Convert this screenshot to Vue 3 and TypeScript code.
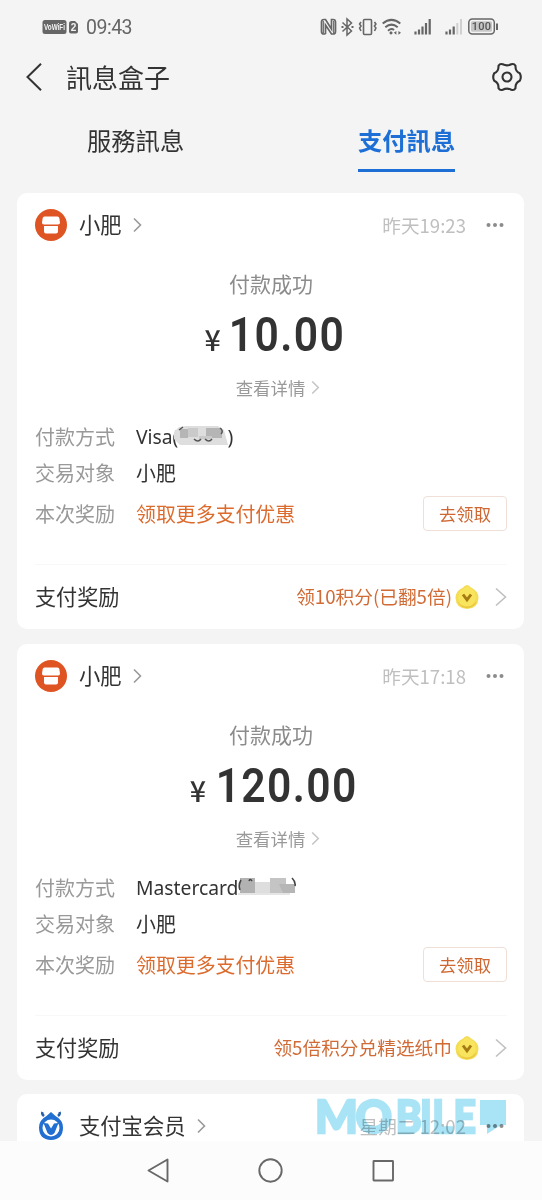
<script setup lang="ts">
interface Payment {
  time: string
  amount: string
  method: string
  mask: 'visa' | 'master'
  reward: string
}

const payments: Payment[] = [
  { time: '昨天19:23', amount: '10.00', method: 'Visa(', mask: 'visa', reward: '领10积分(已翻5倍)' },
  { time: '昨天17:18', amount: '120.00', method: 'Mastercard', mask: 'master', reward: '领5倍积分兑精选纸巾' },
]
</script>

<template>
  <div class="screen">
    <div class="status">
      <svg class="sim" width="38" height="16" viewBox="0 0 38 16">
        <rect x="0.5" y="1" width="24" height="14" rx="2.5" fill="#666" />
        <text x="12.5" y="11.4" text-anchor="middle" textLength="21" lengthAdjust="spacingAndGlyphs" class="sim-text">VoWiFi</text>
        <path d="M27 4.5Q27 2 29.5 2H33L36 5V12.5Q36 14.5 34 14.5H29Q27 14.5 27 12.5Z" fill="#666" />
        <text x="31.5" y="12" text-anchor="middle" class="sim-text two">2</text>
      </svg>
      <span class="clock">09:43</span>
      <svg class="indicators" width="180" height="20" viewBox="320 17 180 20" fill="none" stroke="#666">
        <path d="M325.500 34H324Q321.500 34 321.500 31.500V22Q321.500 19.500 324 19.500H325.500L331.500 29V19.500H333Q335.500 19.500 335.500 22V31.500Q335.500 34 333 34H331.500L325.500 25V34" stroke-width="1.700" />
        <path d="M323.300 21V33M333.700 21V33" stroke-width="1.200" />
        <path d="M342.500 22.500L351.500 31L347 35V19L351.500 23L342.500 31.500" stroke-width="1.500" />
        <path d="M341.500 27h2M351.500 27h2" stroke-width="1.800" />
        <rect x="363.500" y="19.500" width="8" height="15" rx="1" stroke-width="1.600" />
        <path d="M361 22l-1.400 2 1.400 2-1.400 2 1.400 3M374.500 22l1.400 2-1.400 2 1.400 2-1.400 3" stroke-width="1.600" />
        <path d="M382.700 23.500Q391.500 16.200 400.300 23.500M385.300 27.200Q391.500 22 397.700 27.200M388 30.700Q391.500 27.800 394 30" stroke-width="2" />
        <path d="M391 31l1.900 1.900-1.900 1.900-1.900-1.900zM393.800 32.800l2.600-1.900v3.800zM401 32.800l-2.600-1.900v3.800z" fill="#666" stroke="none" />
        <path d="M415.500 31.500V34.500M419 29.500V34.500M422.500 26.500V34.500M426 23V34.500M429.700 19V34.500" stroke-width="2.200" />
        <path d="M446.500 31.500V34.500M450 29.500V34.500M453.700 26.500V34.500" stroke-width="2.200" />
        <path d="M457.300 23V34.500M461 19V34.500" stroke="#d0d0d0" stroke-width="2" />
        <rect x="468.800" y="19" width="25.500" height="15" rx="3.500" stroke-width="1.500" />
        <rect x="471" y="21.300" width="21" height="10.500" rx="1.500" fill="#c6c6c6" stroke="none" />
        <path d="M497 23.500V30" stroke-width="2" />
        <text x="481.500" y="30.300" text-anchor="middle" class="battery">100</text>
      </svg>
    </div>

    <header class="titlebar">
      <svg class="back" width="18" height="30" viewBox="0 0 18 30" fill="none" stroke="#333" stroke-width="2">
        <path d="M16 1.800L2.500 15L16 28.200" />
      </svg>
      <h1>訊息盒子</h1>
      <svg class="gear" width="32" height="32" viewBox="-16 -16 32 32" fill="none" stroke="#333" stroke-width="2.100" stroke-linejoin="round">
        <path d="M-8.500 -11.200Q-7 -13.700 -4.300 -12.700Q0 -10.600 4.300 -12.700Q7 -13.700 8.500 -11.200C8.300 -7 9.800 -5 12.800 -3.800Q14.800 0 12.800 3.800C9.800 5 8.300 7 8.500 11.200Q7 13.700 4.300 12.700Q0 10.600 -4.300 12.700Q-7 13.700 -8.500 11.200C-8.300 7 -9.800 5 -12.800 3.800Q-14.800 0 -12.800 -3.800C-9.800 -5 -8.300 -7 -8.500 -11.200Z" />
        <circle r="4.500" />
      </svg>
    </header>

    <nav class="tabs">
      <div class="tab">服務訊息</div>
      <div class="tab active">支付訊息</div>
    </nav>

    <main class="list">
      <section v-for="p in payments" :key="p.time" class="card">
        <div class="card-head">
          <svg class="avatar" width="32" height="32" viewBox="0 0 32 32">
            <circle cx="16" cy="16" r="16" fill="#df5423" />
            <path d="M9.500 7.500H22.500Q24 7.500 24.300 9L25 13.500Q25.200 15.600 23 15.600H9Q6.800 15.600 7 13.500L7.700 9Q8 7.500 9.500 7.500ZM9 17H23V22.500Q23 24.500 21 24.500H11Q9 24.500 9 22.500Z" fill="#fff" />
          </svg>
          <span class="name">小肥</span>
          <svg class="chev" width="9" height="16" viewBox="0 0 9 16"><path d="M1 1.500L7.500 8L1 14.500" /></svg>
          <span class="time">{{ p.time }}</span>
          <svg class="more" width="18" height="6" viewBox="0 0 18 6" fill="#8c8c8c"><circle cx="2.500" cy="3" r="2" /><circle cx="9" cy="3" r="2" /><circle cx="15.500" cy="3" r="2" /></svg>
        </div>
        <div class="state">付款成功</div>
        <div class="amount"><span class="yen">¥</span><span class="digits">{{ p.amount }}</span></div>
        <div class="detail">
          <span>查看详情</span>
          <svg class="chev pale" width="9" height="15" viewBox="0 0 9 16"><path d="M1 1.500L7.500 8L1 14.500" /></svg>
        </div>
        <div class="row">
          <span class="label">付款方式</span>
          <span class="value method">{{ p.method }}</span>
          <template v-if="p.mask === 'visa'">
            <svg class="mask visa" width="56" height="22" viewBox="0 0 56 22">
              <path d="M5 2L12 1H44L50 5L54 20H6L0 14V7Z" fill="#dedede" />
              <path d="M6 4H14V13H6ZM32 3H48V13H32Z" fill="#b5b5b5" />
              <path d="M14 3H24V12H14ZM25 11H38V14H25Z" fill="#cacaca" />
              <path d="M5 5L9 2M20 14Q24 18 27 14M31 14Q35 18 38 14M46 3Q50 6 47 9" fill="none" stroke="#555" stroke-width="1.500" />
            </svg>
            <span class="value paren">)</span>
          </template>
          <svg v-else class="mask" width="61" height="24" viewBox="0 0 61 24">
            <path d="M3 3H18V18H3Z" fill="#b2b2b2" />
            <path d="M18 7H33V18H18Z" fill="#dedede" />
            <path d="M33 3H49V18H33Z" fill="#c4c4c4" />
            <path d="M42 9H58V18H46Z" fill="#b6b6b6" />
            <path d="M1 18H53V20H1Z" fill="#e5e5e5" />
            <path d="M4 5Q1 10 3 15M12 6Q13 3 15 6M55 3Q59 7 58 11" fill="none" stroke="#444" stroke-width="1.600" />
          </svg>
        </div>
        <div class="row">
          <span class="label">交易对象</span>
          <span class="value">小肥</span>
        </div>
        <div class="row promo">
          <span class="label">本次奖励</span>
          <span class="value orange">领取更多支付优惠</span>
          <button class="claim">去领取</button>
        </div>
        <div class="card-foot">
          <span class="foot-title">支付奖励</span>
          <span class="reward">{{ p.reward }}</span>
          <svg class="coin" width="24" height="26" viewBox="0 0 24 26">
            <path d="M12 1Q14 1 16 3.500Q23.500 7 23.500 14Q23 24.500 12 25Q1 24.500 .5 14Q.5 7 8 3.500Q10 1 12 1Z" fill="#f4dc55" />
            <path d="M12 2.500L19.500 7L21 15L17 21L12 23L5 20L3 13L5 7Z" fill="#f9e45e" />
            <path d="M2 17Q6 24 12 24Q19 24 22 17Q17 22.500 12 22.500Q6 22.500 2 17Z" fill="#e9c53e" />
            <path d="M8 10.500L12 15.800L16 10.500" fill="none" stroke="#a57b13" stroke-width="2.900" />
          </svg>
          <svg class="chev big" width="12" height="20" viewBox="0 0 12 20"><path d="M1 1.500L10.500 10L1 18.500" /></svg>
        </div>
      </section>

      <section class="card last">
        <div class="card-head">
          <svg class="avatar" width="32" height="32" viewBox="0 0 32 32" fill="none">
            <path d="M7.500 2Q6.500 4 9 6M24.500 2Q25.500 4 23 6" stroke="#2760a6" stroke-width="2.500" />
            <path d="M16 2L20.500 6Q28 10 28 17.500Q28 29.500 16 30Q4 29.500 4 17.500Q4 10 11.500 6Z" fill="#216fd0" />
            <circle cx="16" cy="18" r="8.500" fill="#fff" />
            <path d="M8.500 13L13 13.500L16 18.500L19 13.500L23.500 13L19.500 23Q16 27 12.500 23Z" fill="#216fd0" />
          </svg>
          <span class="name">支付宝会员</span>
          <svg class="chev" width="9" height="16" viewBox="0 0 9 16"><path d="M1 1.500L7.500 8L1 14.500" /></svg>
          <span class="time">星期二 12:02</span>
          <svg class="more" width="18" height="6" viewBox="0 0 18 6" fill="#8c8c8c"><circle cx="2.500" cy="3" r="2" /><circle cx="9" cy="3" r="2" /><circle cx="15.500" cy="3" r="2" /></svg>
        </div>
        <svg class="watermark" width="197" height="44" viewBox="0 0 197 44">
          <text x="3 44.5" y="37" transform="scale(0.98 1)">MO</text>
          <text x="98.500 127 141.500 166.500" y="37" transform="scale(0.85 1)">BILE</text>
          <path d="M168 4H194V29H189L175 38V29H168Z" />
        </svg>
      </section>
    </main>

    <footer class="sysnav">
      <svg width="542" height="59" viewBox="0 0 542 59" fill="none" stroke="#686868" stroke-width="1.900" stroke-linejoin="round">
        <path d="M148.500 29.500L167.500 18.500V40.500Z" />
        <circle cx="270.500" cy="29.500" r="11.200" />
        <rect x="373.500" y="20" width="19.500" height="19.500" rx="0.500" />
      </svg>
    </footer>
  </div>
</template>

<style>
html,
body {
  margin: 0;
  overflow: hidden;
}
</style>

<style scoped>
.screen {
  width: 542px;
  height: 1200px;
  display: flex;
  flex-direction: column;
  overflow: hidden;
  background: #f4f4f4;
  color: #333;
  font-family: "Noto Sans CJK SC", "Noto Sans", sans-serif;
}
svg {
  display: block;
  flex: none;
}
.status {
  flex: none;
  height: 54px;
  display: flex;
  align-items: center;
  padding: 0 42px;
}
.sim-text {
  font: 700 8.5px "Liberation Sans", sans-serif;
  fill: #f4f4f4;
}
.two {
  font-size: 10px;
}
.clock {
  margin-left: 6px;
  font: 19.5px Roboto, sans-serif;
  color: #666;
  letter-spacing: -0.5px;
}
.indicators {
  margin-left: auto;
}
.battery {
  font: 500 11px Roboto, sans-serif;
  fill: #555;
  stroke: none;
  letter-spacing: 0.3px;
}
.titlebar {
  flex: none;
  height: 46px;
  display: flex;
  align-items: center;
  padding: 0 19px 0 25px;
}
h1 {
  flex: 1;
  margin: 0 0 0 23px;
  padding-bottom: 1px;
  font-size: 26px;
  line-height: 44px;
  font-weight: 400;
  font-family: "Noto Sans CJK TC", sans-serif;
}
.tabs {
  flex: none;
  height: 93px;
  display: flex;
}
.tab {
  width: 97px;
  height: 72px;
  box-sizing: border-box;
  margin-left: 87px;
  font: 24.3px/80px "Noto Sans CJK TC", sans-serif;
  white-space: nowrap;
}
.tab.active {
  margin-left: 174px;
  font-weight: 700;
  color: #1d6fd6;
  border-bottom: 3px solid #1d6fd6;
}
.list {
  flex: 1;
  min-height: 0;
  overflow: hidden;
  padding: 0 18px 0 17px;
}
.card {
  height: 436px;
  box-sizing: border-box;
  margin-bottom: 15px;
  padding: 0 17px 0 18px;
  border-radius: 10px;
  background: #fff;
  overflow: hidden;
}
.card.last {
  position: relative;
  margin-top: -1px;
}
.card-head {
  height: 64px;
  display: flex;
  align-items: center;
}
.name {
  margin: 0 12px;
  padding-bottom: 3px;
  font-size: 21.3px;
}
.chev {
  fill: none;
  stroke: #999;
  stroke-width: 1.6;
}
.card-head .chev {
  margin-left: -1px;
}
.chev.pale {
  stroke: #c4c4c4;
  margin-left: 6px;
}
.chev.big {
  stroke: #c0c0c0;
  margin-left: 16px;
}
.time {
  margin-left: auto;
  padding-bottom: 1px;
  font-size: 18.6px;
  color: #bfbfbf;
}
.more {
  margin: 0 3px 0 20px;
}
.state {
  height: 53px;
  font-size: 21px;
  line-height: 53px;
  color: #8c8c8c;
  text-align: center;
}
.amount {
  height: 51px;
  display: flex;
  justify-content: center;
  align-items: baseline;
  padding-left: 6px;
  line-height: 50px;
}
.yen {
  font-size: 28.5px;
  font-weight: 500;
}
.digits {
  margin: 0 -10px 0 -1px;
  font: 600 49px/50px Roboto, sans-serif;
  letter-spacing: 1.6px;
  transform: scaleX(0.87);
}
.detail {
  height: 57px;
  display: flex;
  align-items: center;
  justify-content: center;
  padding: 0 0 5px 14px;
  box-sizing: border-box;
  font-size: 17.4px;
  color: #999;
}
.row {
  height: 36px;
  display: flex;
  align-items: center;
}
.label {
  width: 101px;
  font-size: 20px;
  color: #999;
}
.value {
  font-size: 19.9px;
  white-space: nowrap;
}
.method,
.paren {
  font-family: "Noto Sans", sans-serif;
  font-size: 19.3px;
}
.mask {
  margin-left: -1px;
}
.mask.visa {
  margin: 0 -3px 0 -4px;
}
.row.promo {
  height: 47px;
}
.orange {
  color: #dc6b2e;
  padding-bottom: 1px;
}
.claim {
  width: 84px;
  height: 35px;
  box-sizing: border-box;
  margin-left: auto;
  padding: 0;
  border: 1px solid #efdfd7;
  border-radius: 4px;
  background: #fff;
  color: #cf6732;
  font: 17.3px/32px "Noto Sans CJK SC", sans-serif;
}
.card-foot {
  height: 65px;
  display: flex;
  align-items: center;
  margin-top: 27px;
  border-top: 1px solid #f8f8f8;
  box-sizing: border-box;
}
.foot-title {
  padding-bottom: 2px;
  font-size: 21.1px;
}
.reward {
  margin-left: auto;
  padding-bottom: 3px;
  font-size: 18.7px;
  color: #d16b36;
}
.coin {
  margin-left: 3px;
}
.watermark {
  position: absolute;
  left: 295px;
  top: 2px;
  fill: #a9e4f6;
  mix-blend-mode: multiply;
}
.watermark text {
  font: 900 46px Lato, sans-serif;
  stroke: #a9e4f6;
  stroke-width: 2.4px;
}
.sysnav {
  flex: none;
  height: 59px;
  background: #fcfcfc;
}
</style>
